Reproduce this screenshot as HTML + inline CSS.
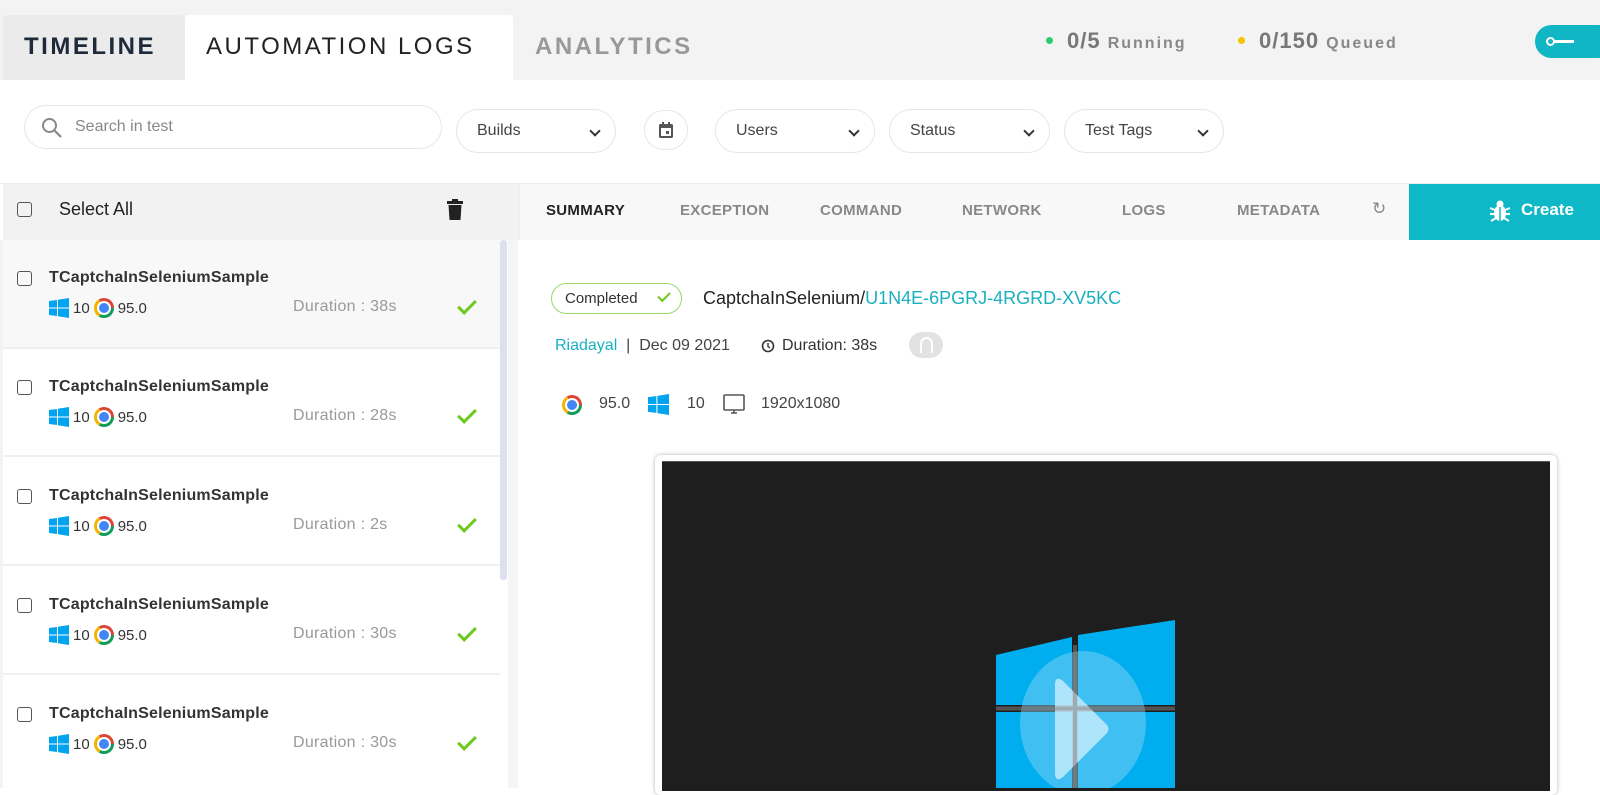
<!DOCTYPE html>
<html><head><meta charset="utf-8"><style>
*{margin:0;padding:0;box-sizing:border-box}
body{width:1600px;height:788px;overflow:hidden;background:#fff;font-family:"Liberation Sans",sans-serif;position:relative;color:#333}
.a{position:absolute}
.tab{font-size:24px;letter-spacing:2.5px;top:33px}
.pill{position:absolute;top:109px;height:44px;border:1px solid #e6e6e6;border-radius:22px;background:#fff;font-size:16px;color:#444;padding:12px 20px}
.chev{position:absolute;right:16px;top:17px;width:8px;height:8px;border-right:2.5px solid #333;border-bottom:2.5px solid #333;transform:rotate(45deg)}
.rt{position:absolute;top:202px;font-size:15px;color:#888;font-weight:bold;letter-spacing:0.3px}
.item{position:absolute;left:3px;width:497px;height:109px;border-bottom:2px solid #f0f0f0}
.cb{position:absolute;width:15px;height:15px;border:1.5px solid #555;border-radius:3px}
.name{position:absolute;left:49px;font-size:16px;font-weight:bold;color:#333;letter-spacing:0.2px}
.meta{position:absolute;left:49px;font-size:15px;color:#333;display:flex;align-items:center;gap:4px}
.dur{position:absolute;left:293px;font-size:16px;color:#999;letter-spacing:0.3px}
.chk{position:absolute;left:458px;width:18px;height:10px;border-left:3px solid #6cc91e;border-bottom:3px solid #6cc91e;transform:rotate(-45deg)}
.win{display:inline-block;width:20px;height:20px;position:relative}
.chr{display:inline-block;width:20px;height:20px;border-radius:50%;background:conic-gradient(from -30deg,#db4437 0 120deg,#0f9d58 120deg 240deg,#f4b400 240deg 360deg);position:relative}
.chr:after{content:"";position:absolute;left:5px;top:5px;width:10px;height:10px;border-radius:50%;background:#4285f4;box-shadow:0 0 0 2px #fff}
</style></head><body>
<div class="a" style="left:0;top:0;width:1600px;height:80px;background:#f3f3f3"></div>
<div class="a" style="left:3px;top:15px;width:182px;height:65px;background:#ebebeb;border-radius:4px 4px 0 0"></div>
<div class="a" style="left:185px;top:15px;width:328px;height:66px;background:#fff;border-radius:4px 4px 0 0"></div>
<div class="a tab" style="left:24px;color:#1e2a3a;font-weight:bold">TIMELINE</div>
<div class="a tab" style="left:206px;color:#222">AUTOMATION LOGS</div>
<div class="a tab" style="left:535px;color:#999;font-weight:bold">ANALYTICS</div>
<div class="a" style="left:1046px;top:37px;width:7px;height:7px;border-radius:50%;background:#2ecc71"></div>
<div class="a" style="left:1067px;top:28px;font-size:22px;color:#777;font-weight:bold;letter-spacing:1px">0/5 <span style="font-size:16px;letter-spacing:2px;font-weight:bold;color:#888">Running</span></div>
<div class="a" style="left:1238px;top:37px;width:7px;height:7px;border-radius:50%;background:#f5c400"></div>
<div class="a" style="left:1259px;top:28px;font-size:22px;color:#777;font-weight:bold;letter-spacing:1px">0/150 <span style="font-size:16px;letter-spacing:2px;font-weight:bold;color:#888">Queued</span></div>
<div class="a" style="left:1535px;top:25px;width:80px;height:33px;border-radius:17px;background:#10b6c4"></div>
<div class="a" style="left:1546px;top:37px;width:9px;height:9px;border-radius:50%;border:2px solid #fff"></div>
<div class="a" style="left:1554px;top:40px;width:20px;height:3px;background:#fff"></div>
<div class="pill" style="left:24px;top:105px;width:418px;color:#888;padding-left:50px">Search in test</div>
<svg class="a" style="left:40px;top:116px" width="24" height="24" viewBox="0 0 24 24"><circle cx="9.5" cy="9.5" r="6.5" fill="none" stroke="#888" stroke-width="2"/><path d="M14.5 14.5L21 21" stroke="#888" stroke-width="2.2"/></svg>
<div class="pill" style="left:456px;width:160px">Builds<span class="chev"></span></div>
<div class="pill" style="left:644px;width:44px;top:110px;height:40px"></div>
<svg class="a" style="left:657px;top:121px" width="18" height="18" viewBox="0 0 18 18"><rect x="2" y="3" width="14" height="14" rx="1.5" fill="#555"/><rect x="4" y="7" width="10" height="8" fill="#fff"/><rect x="9" y="10" width="3" height="3" fill="#555"/><rect x="5" y="1" width="2" height="4" fill="#555"/><rect x="11" y="1" width="2" height="4" fill="#555"/></svg>
<div class="pill" style="left:715px;width:160px">Users<span class="chev"></span></div>
<div class="pill" style="left:889px;width:161px">Status<span class="chev"></span></div>
<div class="pill" style="left:1064px;width:160px">Test Tags<span class="chev"></span></div>
<div class="a" style="left:0;top:183px;width:1600px;height:1px;background:#ececec"></div>
<div class="a" style="left:3px;top:184px;width:523px;height:56px;background:#f2f2f2"></div>
<div class="cb" style="left:17px;top:202px"></div>
<div class="a" style="left:59px;top:199px;font-size:18px;color:#222">Select All</div>
<svg class="a" style="left:446px;top:199px" width="18" height="22" viewBox="0 0 18 22"><rect x="1" y="2" width="16" height="3" fill="#222"/><rect x="6" y="0" width="6" height="3" fill="#222"/><path d="M2.5 6h13l-1 15h-11z" fill="#222"/></svg>
<div class="a" style="left:519px;top:184px;width:1081px;height:56px;background:#f8f8f8;border-left:1px solid #eee"></div>
<div class="rt" style="left:546px;color:#222">SUMMARY</div>
<div class="rt" style="left:680px">EXCEPTION</div>
<div class="rt" style="left:820px">COMMAND</div>
<div class="rt" style="left:962px">NETWORK</div>
<div class="rt" style="left:1122px">LOGS</div>
<div class="rt" style="left:1237px">METADATA</div>
<div class="a" style="left:1372px;top:199px;font-size:17px;color:#888">&#8635;</div>
<div class="a" style="left:1409px;top:184px;width:191px;height:56px;background:#0fb8c6"></div>
<svg class="a" style="left:1489px;top:199px" width="22" height="24" viewBox="0 0 22 24"><ellipse cx="11" cy="14" rx="6" ry="8" fill="#fff"/><circle cx="11" cy="5" r="3.5" fill="#fff"/><path d="M1 9l5 2M21 9l-5 2M1 15h5M21 15h-5M2 22l5-3M20 22l-5-3" stroke="#fff" stroke-width="2"/><path d="M11 8v14" stroke="#0fb8c6" stroke-width="1.5"/></svg>
<div class="a" style="left:1521px;top:200px;font-size:17px;color:#fff;font-weight:bold">Create</div>
<div class="a" style="left:0;top:240px;width:3px;height:548px;background:#f3f3f3"></div>
<div class="a" style="left:508px;top:240px;width:10px;height:548px;background:#f5f5f5"></div>
<div class="a" style="left:500px;top:240px;width:7px;height:340px;background:#dfe0ee;border-radius:3px"></div>
<div class="item" style="top:240px;background:#f8f8f8"></div>
<div class="item" style="top:348px"></div>
<div class="item" style="top:457px"></div>
<div class="item" style="top:566px"></div>
<div class="item" style="top:675px;border:none"></div>

<div class="cb" style="left:17px;top:271px"></div><div class="name" style="top:269px">TCaptchaInSeleniumSample</div>
<div class="meta" style="top:298px"><svg class="win" viewBox="0 0 20 20"><path d="M0 3l8-1v7.5H0zM9 1.8L20 0v9.5H9zM0 10.5h8V18l-8-1zM9 10.5h11V20L9 18.2z" fill="#00a4ef"/></svg><span>10</span><span class="chr"></span><span>95.0</span></div>
<div class="dur" style="top:298px">Duration : 38s</div><div class="chk" style="top:300px"></div>

<div class="cb" style="left:17px;top:380px"></div><div class="name" style="top:378px">TCaptchaInSeleniumSample</div>
<div class="meta" style="top:407px"><svg class="win" viewBox="0 0 20 20"><path d="M0 3l8-1v7.5H0zM9 1.8L20 0v9.5H9zM0 10.5h8V18l-8-1zM9 10.5h11V20L9 18.2z" fill="#00a4ef"/></svg><span>10</span><span class="chr"></span><span>95.0</span></div>
<div class="dur" style="top:407px">Duration : 28s</div><div class="chk" style="top:409px"></div>

<div class="cb" style="left:17px;top:489px"></div><div class="name" style="top:487px">TCaptchaInSeleniumSample</div>
<div class="meta" style="top:516px"><svg class="win" viewBox="0 0 20 20"><path d="M0 3l8-1v7.5H0zM9 1.8L20 0v9.5H9zM0 10.5h8V18l-8-1zM9 10.5h11V20L9 18.2z" fill="#00a4ef"/></svg><span>10</span><span class="chr"></span><span>95.0</span></div>
<div class="dur" style="top:516px">Duration : 2s</div><div class="chk" style="top:518px"></div>

<div class="cb" style="left:17px;top:598px"></div><div class="name" style="top:596px">TCaptchaInSeleniumSample</div>
<div class="meta" style="top:625px"><svg class="win" viewBox="0 0 20 20"><path d="M0 3l8-1v7.5H0zM9 1.8L20 0v9.5H9zM0 10.5h8V18l-8-1zM9 10.5h11V20L9 18.2z" fill="#00a4ef"/></svg><span>10</span><span class="chr"></span><span>95.0</span></div>
<div class="dur" style="top:625px">Duration : 30s</div><div class="chk" style="top:627px"></div>

<div class="cb" style="left:17px;top:707px"></div><div class="name" style="top:705px">TCaptchaInSeleniumSample</div>
<div class="meta" style="top:734px"><svg class="win" viewBox="0 0 20 20"><path d="M0 3l8-1v7.5H0zM9 1.8L20 0v9.5H9zM0 10.5h8V18l-8-1zM9 10.5h11V20L9 18.2z" fill="#00a4ef"/></svg><span>10</span><span class="chr"></span><span>95.0</span></div>
<div class="dur" style="top:734px">Duration : 30s</div><div class="chk" style="top:736px"></div>

<div class="a" style="left:551px;top:283px;width:131px;height:31px;border:1.5px solid #9cd86a;border-radius:16px;font-size:15px;color:#333;padding:6px 0 0 13px">Completed</div>
<div class="a" style="left:658px;top:292px;width:12px;height:7px;border-left:2.5px solid #6cc91e;border-bottom:2.5px solid #6cc91e;transform:rotate(-45deg)"></div>
<div class="a" style="left:703px;top:288px;font-size:18px;color:#222">CaptchaInSelenium/<span style="color:#1ab0c0">U1N4E-6PGRJ-4RGRD-XV5KC</span></div>
<div class="a" style="left:555px;top:337px;font-size:16px;color:#444"><span style="color:#1ab0c0">Riadayal</span> &nbsp;| &nbsp;Dec 09 2021</div>
<svg class="a" style="left:761px;top:339px" width="14" height="14" viewBox="0 0 14 14"><circle cx="7" cy="7" r="5.5" fill="none" stroke="#333" stroke-width="1.6"/><path d="M7 4v3.5l2 1.5" stroke="#333" stroke-width="1.4" fill="none"/></svg>
<div class="a" style="left:782px;top:337px;font-size:16px;color:#333">Duration: 38s</div>
<div class="a" style="left:909px;top:332px;width:34px;height:26px;border-radius:13px;background:#e2e2e2"></div>
<div class="a" style="left:920px;top:337px;width:13px;height:16px;border:2.5px solid #fff;border-bottom:none;border-radius:7px 7px 0 0"></div>
<span class="a chr" style="left:562px;top:395px"></span>
<div class="a" style="left:599px;top:395px;font-size:16px;color:#444">95.0</div>
<svg class="a" style="left:648px;top:394px" width="21" height="21" viewBox="0 0 20 20"><path d="M0 3l8-1v7.5H0zM9 1.8L20 0v9.5H9zM0 10.5h8V18l-8-1zM9 10.5h11V20L9 18.2z" fill="#00a4ef"/></svg>
<div class="a" style="left:687px;top:395px;font-size:16px;color:#444">10</div>
<svg class="a" style="left:722px;top:394px" width="24" height="22" viewBox="0 0 24 22"><rect x="2" y="1" width="20" height="15" rx="1" fill="none" stroke="#555" stroke-width="1.6"/><path d="M9 19h6M12 16v3" stroke="#555" stroke-width="1.6"/></svg>
<div class="a" style="left:761px;top:395px;font-size:16px;color:#444">1920x1080</div>
<div class="a" style="left:655px;top:455px;width:902px;height:340px;background:#fff;border-radius:6px;box-shadow:0 0 4px rgba(0,0,0,.3)"></div>
<div class="a" style="left:662px;top:461px;width:888px;height:330px;background:#1e1e1e;border-top:1px solid #555"></div>
<svg class="a" style="left:990px;top:615px" width="190" height="173" viewBox="0 0 190 173"><path d="M6 40L82 22V90H6zM88 20L185 5V90H88zM6 97H82V173H6zM88 97H185V173H88z" fill="#00adef"/><ellipse cx="93" cy="108" rx="63" ry="72" fill="#8fd8f6" opacity=".45"/><path d="M65 70q0-10 8-4l43 43q5 5 0 10l-43 43q-8 6-8-4z" fill="#d4f1fd" opacity=".75"/><path d="M85 30v143M6 93.5H185" stroke="#888" stroke-width="4" opacity=".5"/></svg>
</body></html>
